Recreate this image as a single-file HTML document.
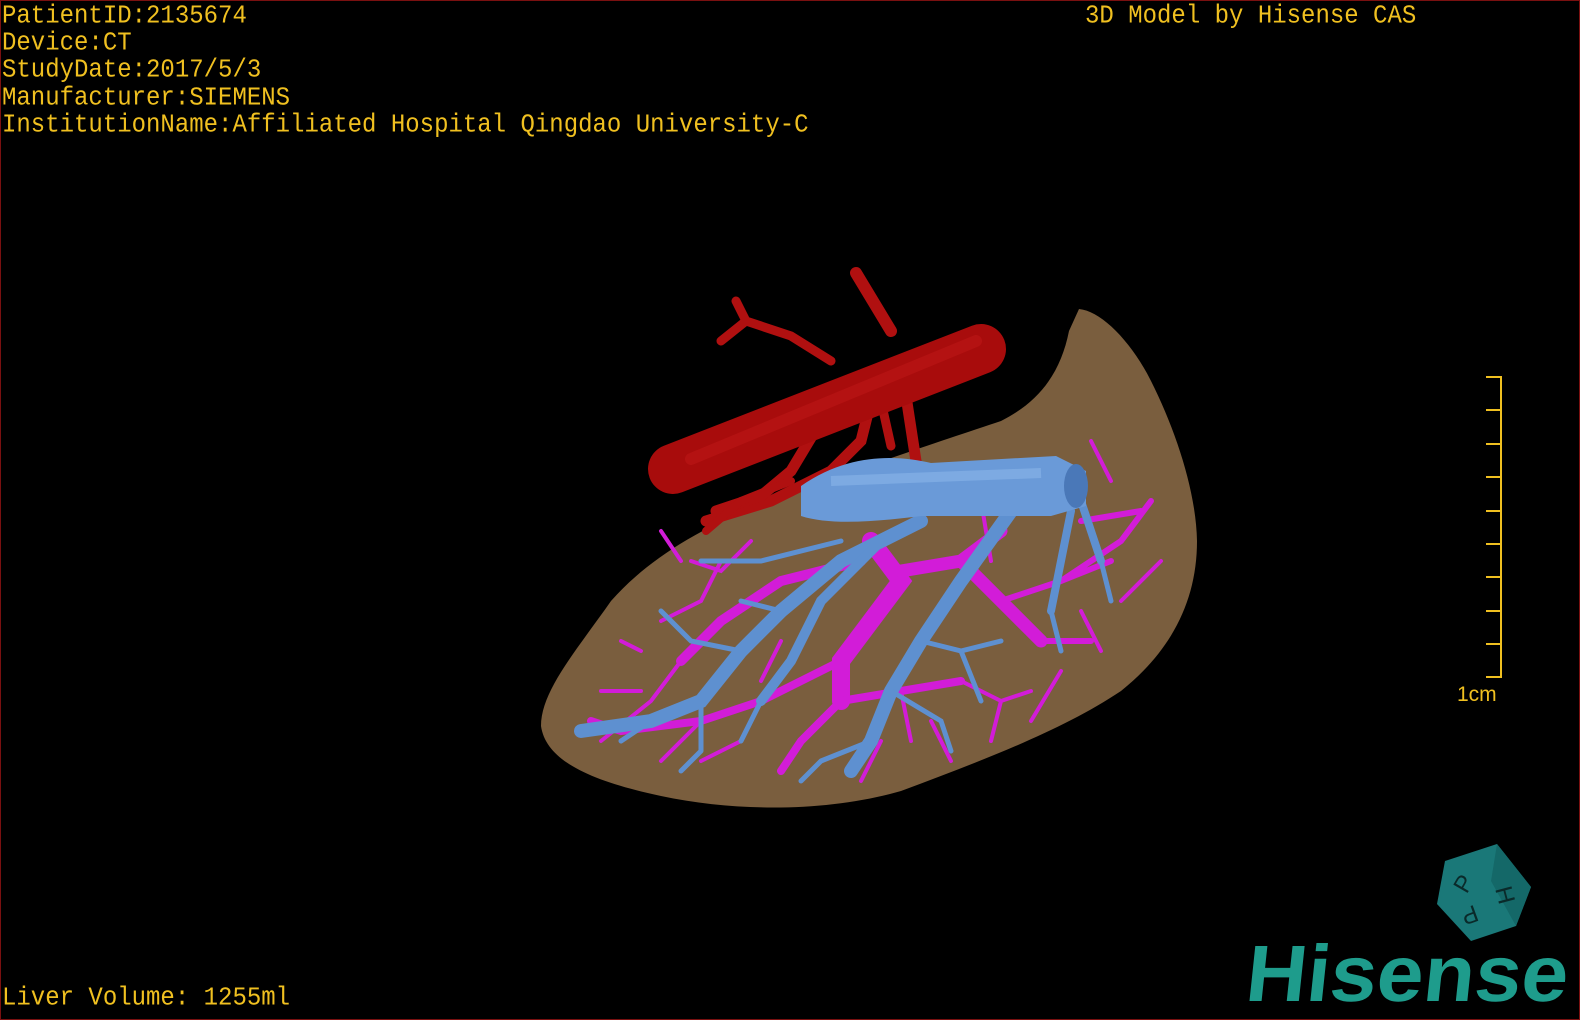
<!DOCTYPE html>
<html><head><meta charset="utf-8"><style>
html,body{margin:0;padding:0;background:#000;}
#f{position:relative;width:1578px;height:1018px;border:1px solid #7a1010;background:#000;overflow:hidden;}
.t{position:absolute;font-family:"Liberation Mono",monospace;font-size:24px;color:#f0c020;line-height:25.2px;white-space:pre;transform:scaleY(1.08);transform-origin:0 0;}
svg{position:absolute;left:0;top:0;}
</style></head><body><div id="f">
<svg width="1580" height="1020" viewBox="0 0 1580 1020">
<!-- liver -->
<path d="M1078 308 C1100 310 1130 340 1150 380 C1175 430 1195 490 1196 540 C1196 600 1170 650 1120 690 C1060 730 980 760 900 790 C830 810 740 812 660 795 C590 780 545 760 540 725 C540 690 575 650 610 600 C645 560 700 525 770 500 C850 470 940 440 1000 420 C1040 400 1060 370 1068 330 Z" fill="#7a5e3e"/>
<!-- red branches -->
<g stroke="#b01010" fill="none" stroke-linecap="round">
<path d="M855 272 L890 330" stroke-width="12"/>
<path d="M735 300 L745 320 L720 340 M745 320 L790 335 L830 360" stroke-width="9"/>
<path d="M870 400 L860 440 L830 470 L770 500 L705 520" stroke-width="11"/>
<path d="M905 395 L915 460 L920 520" stroke-width="11"/>
<path d="M880 400 L890 445" stroke-width="9"/>
<path d="M820 420 L790 470 L760 495 L715 510" stroke-width="11"/>
<path d="M790 480 L740 500 L705 530" stroke-width="8"/>
</g>
<!-- aorta -->
<path d="M672 468 L980 348" stroke="#a80c0c" stroke-width="50" stroke-linecap="round"/>
<path d="M690 458 L975 340" stroke="#c01818" stroke-width="12" stroke-linecap="round" opacity="0.5"/>
<!-- magenta -->
<g stroke="#d21cd8" fill="none" stroke-linecap="round">
<path d="M870 540 L900 580 L870 620 L840 660 L840 700" stroke-width="18"/>
<path d="M900 570 L960 560 L1000 530 M960 560 L1000 600 L1040 640" stroke-width="13"/>
<path d="M860 560 L780 580 L720 620 L680 660" stroke-width="10"/>
<path d="M840 660 L760 700 L700 720 L620 730 L590 720" stroke-width="8"/>
<path d="M840 700 L800 740 L780 770 M840 700 L900 690 L960 680" stroke-width="8"/>
<path d="M1000 600 L1060 580 L1120 540 L1150 500 M1040 640 L1090 640 M1060 580 L1110 560 M1080 520 L1140 510" stroke-width="6"/>
<path d="M750 540 L720 570 L690 560 M700 600 L660 620 M680 660 L650 700 L600 740 M760 700 L740 740 L700 760 M960 680 L1000 700 L1030 690 M900 690 L910 740 M1110 480 L1090 440 M990 560 L980 500 M1060 670 L1030 720 M640 650 L620 640 M700 720 L660 760 M780 640 L760 680 M1000 700 L990 740 M1120 600 L1160 560 M1080 610 L1100 650 M880 740 L860 780 M930 720 L950 760 M640 690 L600 690 M720 560 L700 600 M680 560 L660 530" stroke-width="4"/>
</g>
<!-- blue -->
<g stroke="#5e90d0" fill="none" stroke-linecap="round">
<path d="M920 520 L840 560 L780 610 L740 650 L700 700 L650 720 L580 730" stroke-width="14"/>
<path d="M1010 510 L960 580 L920 640 L890 690 L870 740 L850 770" stroke-width="14"/>
<path d="M880 540 L820 600 L790 660 L760 700" stroke-width="10"/>
<path d="M1070 510 L1060 560 L1050 610 M1080 500 L1100 560" stroke-width="8"/>
<path d="M840 540 L760 560 L700 560 M700 700 L700 750 M740 650 L690 640 L660 610 M920 640 L960 650 L980 700 M870 740 L820 760 M890 690 L940 720 L950 750 M780 610 L740 600 M1050 610 L1060 650 M650 720 L620 740 M700 750 L680 770 M760 700 L740 740 M820 760 L800 780 M960 650 L1000 640 M1100 560 L1110 600" stroke-width="5"/>
</g>
<!-- IVC -->
<path d="M800 485 C850 450 900 455 930 462 L1055 455 L1085 470 L1085 505 L1050 515 L920 515 C880 520 830 525 800 515 Z" fill="#6a9ad8"/>
<path d="M830 480 L1040 472" stroke="#8ab6ea" stroke-width="10" opacity="0.6"/>
<ellipse cx="1075" cy="485" rx="12" ry="22" fill="#4a78b8"/>
<!-- ruler -->
<g stroke="#f0c020" stroke-width="2">
<line x1="1500" y1="375" x2="1500" y2="677"/>
<line x1="1485" y1="376" x2="1500" y2="376"/><line x1="1485" y1="409" x2="1500" y2="409"/><line x1="1485" y1="443" x2="1500" y2="443"/><line x1="1485" y1="476" x2="1500" y2="476"/><line x1="1485" y1="510" x2="1500" y2="510"/><line x1="1485" y1="543" x2="1500" y2="543"/><line x1="1485" y1="576" x2="1500" y2="576"/><line x1="1485" y1="610" x2="1500" y2="610"/><line x1="1485" y1="643" x2="1500" y2="643"/><line x1="1485" y1="676" x2="1500" y2="676"/>
</g>
<text x="1456" y="700" font-family="Liberation Sans,sans-serif" font-size="21" fill="#f0c020">1cm</text>
<!-- cube -->
<polygon points="1496,843 1530,886 1515,925 1470,940 1436,903 1444,860" fill="#1a7878"/>
<polygon points="1496,843 1530,886 1515,925 1490,880" fill="#146868"/>
<text x="1452" y="890" font-family="Liberation Sans,sans-serif" font-size="24" fill="#0a2a2a" transform="rotate(-60 1462 880)">P</text>
<text x="1500" y="900" font-family="Liberation Sans,sans-serif" font-size="24" fill="#0a2a2a" transform="rotate(75 1505 890)">H</text>
<text x="1460" y="918" font-family="Liberation Sans,sans-serif" font-size="24" fill="#0a2a2a" transform="rotate(160 1468 912)">P</text>
<text x="1244" y="1000" font-family="Liberation Sans,sans-serif" font-size="80" font-weight="bold" fill="#1e9c8c" textLength="322" lengthAdjust="spacingAndGlyphs" transform="skewX(-6) translate(104 0)">Hisense</text>
</svg>
<div class="t" style="left:1px;top:2px">PatientID:2135674
Device:CT
StudyDate:2017/5/3
Manufacturer:SIEMENS
InstitutionName:Affiliated Hospital Qingdao University-C</div>
<div class="t" style="left:1084px;top:2px">3D Model by Hisense CAS</div>
<div class="t" style="left:1px;top:984px">Liver Volume: 1255ml</div>
</div></body></html>
